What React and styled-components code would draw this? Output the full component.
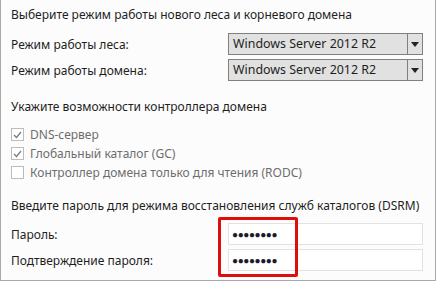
import React from 'react';
import styled, { createGlobalStyle } from 'styled-components';

const GlobalStyle = createGlobalStyle`
  html, body {
    margin: 0;
    background: #ffffff;
  }
  body {
    font-family: "Noto Sans", "Open Sans", sans-serif;
    font-size: 12px;
    color: #1e1e1e;
  }
`;

const Panel = styled.div`
  box-sizing: border-box;
  width: 436px;
  height: 281px;
  background: #fcfcfc;
  border: 1px solid #a9a9a9;
  border-top: none;
  padding: 5px 12px 0 10px;
  display: flex;
  flex-direction: column;
  white-space: nowrap;
`;

const Heading = styled.div`
  height: 20px;
  line-height: 20px;
  margin-bottom: ${p => p.gap || 8}px;
`;

const FieldRow = styled.div`
  display: flex;
  align-items: center;
  height: 22px;
  margin-bottom: ${p => p.gap || 0}px;
`;

const Label = styled.div`
  width: 217px;
  flex: none;
`;

const Select = styled.div`
  box-sizing: border-box;
  width: 198px;
  height: 22px;
  display: flex;
  background: #e1e1e1;
  border: 1px solid #7f7f7f;
  font-size: 12.4px;
`;

const SelectValue = styled.div`
  flex: 1;
  padding-left: 4px;
  line-height: 20px;
`;

const SelectArrow = styled.div`
  width: 14px;
  border-left: 1px solid #7f7f7f;
  display: flex;
  align-items: center;
  justify-content: center;
`;

const Check = styled.label`
  display: flex;
  align-items: center;
  height: 19px;
  color: #6d6d6d;
`;

const Box = styled.span`
  box-sizing: border-box;
  width: 13px;
  height: 13px;
  border: 1px solid #bcbcbc;
  background: #ffffff;
  margin-right: 6px;
  display: flex;
  align-items: center;
  justify-content: center;
`;

const Checks = styled.div`
  display: flex;
  flex-direction: column;
  margin-bottom: 14px;
`;

const PassWrap = styled.div`
  position: relative;
`;

const Input = styled.div`
  box-sizing: border-box;
  width: 197px;
  height: 22px;
  background: #ffffff;
  border: 1px solid #e2e2e2;
  padding-left: 3px;
  display: flex;
  align-items: center;
  font-size: 10px;
  letter-spacing: -0.4px;
  color: #1b1b2b;
`;

const Highlight = styled.div`
  position: absolute;
  left: 207px;
  top: -6px;
  width: 80px;
  height: 60px;
  box-sizing: border-box;
  border: 3px solid #e00d0d;
  border-radius: 2px;
  pointer-events: none;
`;

const Arrow = () => (
  <svg width="8" height="5" viewBox="0 0 8 5">
    <path d="M0 0h8L4 5z" fill="#222" />
  </svg>
);

const Tick = () => (
  <svg width="9" height="8" viewBox="0 0 9 8">
    <path d="M1 4l2.5 2.5L8 1" stroke="#7a7a7a" strokeWidth="1.3" fill="none" />
  </svg>
);

function App() {
  const checks = [
    { text: 'DNS-сервер', on: true },
    { text: 'Глобальный каталог (GC)', on: true },
    { text: 'Контроллер домена только для чтения (RODC)', on: false },
  ];
  return (
    <>
      <GlobalStyle />
      <Panel>
        <Heading gap={8}>Выберите режим работы нового леса и корневого домена</Heading>
        <FieldRow gap={4}>
          <Label>Режим работы леса:</Label>
          <Select>
            <SelectValue>Windows Server 2012 R2</SelectValue>
            <SelectArrow><Arrow /></SelectArrow>
          </Select>
        </FieldRow>
        <FieldRow gap={16}>
          <Label>Режим работы домена:</Label>
          <Select>
            <SelectValue>Windows Server 2012 R2</SelectValue>
            <SelectArrow><Arrow /></SelectArrow>
          </Select>
        </FieldRow>
        <Heading gap={8}>Укажите возможности контроллера домена</Heading>
        <Checks>
          {checks.map(c => (
            <Check key={c.text}>
              <Box>{c.on && <Tick />}</Box>
              {c.text}
            </Check>
          ))}
        </Checks>
        <Heading gap={7}>Введите пароль для режима восстановления служб каталогов (DSRM)</Heading>
        <PassWrap>
          <FieldRow gap={4}>
            <Label>Пароль:</Label>
            <Input>●●●●●●●●</Input>
          </FieldRow>
          <FieldRow>
            <Label>Подтверждение пароля:</Label>
            <Input>●●●●●●●●</Input>
          </FieldRow>
          <Highlight />
        </PassWrap>
      </Panel>
    </>
  );
}

export default App;
